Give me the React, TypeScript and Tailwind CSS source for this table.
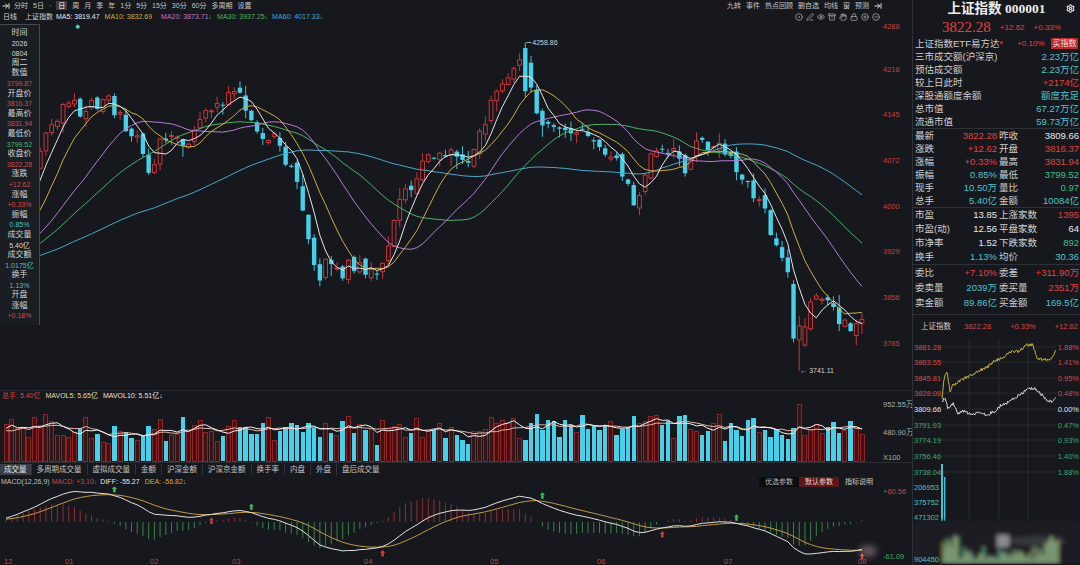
import {
  ArrowRightToLine,
  Settings,
  CircleDot,
  PenLine,
  Eye,
  Archive,
  Hand,
  Lock,
  CirclePlus,
  CircleMinus,
} from "lucide-react";

const BG = "#16181d";
const RED = "#d9393b";
const CYAN = "#46d0ea";
const FONT = "Liberation Sans, Noto Sans CJK SC, sans-serif";

function mulberry32(a: number) {
  return function () {
    a |= 0;
    a = (a + 0x6d2b79f5) | 0;
    let t = Math.imul(a ^ (a >>> 15), 1 | a);
    t = (t + Math.imul(t ^ (t >>> 7), 61 | t)) ^ t;
    return ((t ^ (t >>> 14)) >>> 0) / 4294967296;
  };
}

function interp(pts: [number, number][], x: number) {
  if (x <= pts[0][0]) return pts[0][1];
  for (let k = 1; k < pts.length; k++) {
    if (x <= pts[k][0]) {
      const [x0, y0] = pts[k - 1];
      const [x1, y1] = pts[k];
      return y0 + ((y1 - y0) * (x - x0)) / (x1 - x0);
    }
  }
  return pts[pts.length - 1][1];
}

function sma(arr: number[], n: number) {
  return arr.map((_, i) => {
    if (i < n - 1) return NaN;
    let s = 0;
    for (let k = i - n + 1; k <= i; k++) s += arr[k];
    return s / n;
  });
}

function ema(arr: number[], n: number) {
  const k = 2 / (n + 1);
  const out: number[] = [];
  arr.forEach((v, i) => out.push(i === 0 ? v : v * k + out[i - 1] * (1 - k)));
  return out;
}

// daily candles, x in page pixels
const N = 151;
const W = 70;
const STEP = (862 - 6) / (N - 1);
const cx = (i: number) => 6 + i * STEP;
const py = (p: number) => 24 + (4288 - p) * (319 / 503);

const KEYS: [number, number][] = [
  [-420, 3900], [-300, 3930], [-200, 3890], [-100, 3910], [0, 3930], [20, 4010],
  [40, 4090], [55, 4130], [65, 4165], [80, 4150], [95, 4160], [110, 4165],
  [125, 4130], [140, 4100], [150, 4050], [162, 4110], [175, 4120], [190, 4095],
  [205, 4150], [220, 4170], [236, 4185], [248, 4150], [262, 4120], [278, 4100],
  [292, 4060], [305, 3990], [318, 3870], [328, 3925], [340, 3895], [352, 3910],
  [365, 3905], [378, 3895], [390, 3950], [402, 4010], [418, 4050], [435, 4085],
  [452, 4090], [468, 4080], [482, 4130], [496, 4180], [510, 4215], [522, 4245],
  [532, 4180], [545, 4120], [558, 4125], [572, 4110], [588, 4115], [600, 4085],
  [615, 4075], [626, 4040], [634, 4000], [645, 4050], [658, 4095], [670, 4090],
  [684, 4060], [697, 4105], [712, 4100], [724, 4080], [738, 4065], [752, 4030],
  [765, 3995], [778, 3930], [790, 3880], [800, 3780], [810, 3845], [822, 3855],
  [835, 3830], [848, 3815], [862, 3822],
];

type Candle = { o: number; h: number; l: number; c: number; v: number };
const rand = mulberry32(20260804);
const all: Candle[] = [];
let prev = 3900;
for (let i = -W; i < N; i++) {
  const base = interp(KEYS, cx(i));
  const c = base + (rand() - 0.5) * 26;
  const o = prev + (rand() - 0.5) * 14;
  const h = Math.max(o, c) + rand() * rand() * 22 + 1;
  const l = Math.min(o, c) - rand() * rand() * 22 - 1;
  const v = 0.3 + rand() * 0.5 + rand() * rand() * 0.25 + Math.abs(c - o) / 300;
  all.push({ o, h, l, c, v });
  prev = c;
}
for (let i = W; i < all.length; i++) {
  all[i].h = Math.min(all[i].h, 4244);
  all[i].l = Math.max(all[i].l, 3762);
}
const ip = Math.round((523 - 6) / STEP);
const il = Math.round((800 - 6) / STEP);
Object.assign(all[W + ip], { o: 4250, c: 4182, h: 4258.86, l: 4172 });
Object.assign(all[W + il - 1], { o: 3878, c: 3792, h: 3884, l: 3786 });
Object.assign(all[W + il], { o: 3790, c: 3812, h: 3828, l: 3741.11 });
Object.assign(all[W + N - 1], { o: 3816.37, c: 3822.28, h: 3831.94, l: 3799.52 });

const vis = all.slice(W);
const closes = all.map((c) => c.c);
const MAS = [
  { n: 60, color: "#4aa9cc" },
  { n: 30, color: "#49b36a" },
  { n: 20, color: "#b77bd6" },
  { n: 10, color: "#cfae3e" },
  { n: 5, color: "#e6e6e6" },
].map((m) => ({
  ...m,
  pts: sma(closes, m.n)
    .slice(W)
    .map((v, i) => `${cx(i).toFixed(1)},${py(v).toFixed(1)}`)
    .join(" "),
}));

const vols = all.map((c) => c.v);
const vmax = Math.max(...vis.map((c) => c.v)) * 1.02;
const vy = (v: number) => 461 - (v / vmax) * 58;
const mavol = [
  { n: 10, color: "#e3b6a6" },
  { n: 5, color: "#f2f2f2" },
].map((m) => ({
  ...m,
  pts: sma(vols, m.n)
    .slice(W)
    .map((v, i) => `${cx(i).toFixed(1)},${vy(v).toFixed(1)}`)
    .join(" "),
}));

const e12 = ema(closes, 12);
const e26 = ema(closes, 26);
const diffAll = e12.map((v, i) => v - e26[i]);
const deaAll = ema(diffAll, 9);
const diff = diffAll.slice(W);
const dea = deaAll.slice(W);
const macd = diff.map((v, i) => 2 * (v - dea[i]));
const mMax = Math.max(...diff.map(Math.abs), ...dea.map(Math.abs), ...macd.map(Math.abs));
const my = (v: number) => 522 - (v / mMax) * 32;
const crosses: { x: number; y: number; up: boolean }[] = [];
for (let j = 1; j < N; j++) {
  if (macd[j - 1] < 0 && macd[j] >= 0) crosses.push({ x: cx(j), y: my(dea[j]) + 3, up: true });
  if (macd[j - 1] > 0 && macd[j] <= 0) crosses.push({ x: cx(j), y: my(dea[j]) - 9, up: false });
}

const MONTHS: [string, number][] = [
  ["12", 4], ["01", 65], ["02", 150], ["03", 232], ["04", 364],
  ["05", 490], ["06", 597], ["07", 724], ["08", 858],
];

function TopBar() {
  const periods = ["分时", "5日", "·", "日", "周", "月", "季", "年", "1分", "5分", "15分", "30分", "60分", "多周期", "设置"];
  const tools = ["九转", "事件", "热点回顾", "删自选", "均线", "窗", "预测"];
  return (
    <div className="flex flex-col text-[7px] leading-none">
      <div className="flex h-[11px] items-center">
        <ArrowRightToLine className="ml-[2px] h-[8px] w-[8px] text-[#e0e0e0]" strokeWidth={3} />
        <div className="ml-[4px] flex items-center gap-[5px]">
          {periods.map((p) => (
            <span
              key={p}
              className={p === "日" ? "bg-[#3b3e45] px-[2px] py-[1px] text-white" : "text-[#c4c4c4]"}
            >
              {p}
            </span>
          ))}
        </div>
        <div className="ml-auto mr-[30px] flex items-center gap-[5px] text-[#c4c4c4]">
          {tools.map((t) => (
            <span key={t}>{t}</span>
          ))}
          <ArrowRightToLine className="h-[8px] w-[8px] text-[#e0e0e0]" strokeWidth={3} />
        </div>
      </div>
      <div className="flex h-[11px] items-center">
        <span className="ml-[3px] text-[#d0d0d0]">日线</span>
        <span className="ml-[8px] text-[#d0d0d0]">上证指数</span>
        <span className="ml-[3px] text-[#e8e8e8]">MA5: 3819.47</span>
        <span className="ml-[5px] text-[#cfae3e]">MA10: 3832.69</span>
        <span className="ml-[9px] text-[#b77bd6]">
          MA20: 3873.71<span className="text-[#3fb35f]">↓</span>
        </span>
        <span className="ml-[5px] text-[#49b36a]">
          MA30: 3937.25<span className="text-[#3fb35f]">↓</span>
        </span>
        <span className="ml-[4px] text-[#4aa9cc]">
          MA60: 4017.33<span className="text-[#3fb35f]">↓</span>
        </span>
        <div className="ml-auto mr-[32px] flex items-center gap-[3px] text-[#bdbdbd]">
          <CircleDot className="h-[8px] w-[8px]" />
          <PenLine className="h-[8px] w-[8px]" />
          <Eye className="h-[8px] w-[8px]" />
          <Archive className="h-[8px] w-[8px]" />
          <Hand className="h-[8px] w-[8px]" />
          <Lock className="h-[8px] w-[8px]" />
          <CirclePlus className="h-[8px] w-[8px]" />
          <CircleMinus className="h-[8px] w-[8px]" />
        </div>
      </div>
    </div>
  );
}

const INFO: [string, string][] = [
  ["时间", "l"], ["2026", "w"], ["0804", "w"], ["周二", "l"], ["数值", "l"], ["3799.87", "r"],
  ["开盘价", "l"], ["3816.37", "r"], ["最高价", "l"], ["3831.94", "r"], ["最低价", "l"], ["3799.52", "g"],
  ["收盘价", "l"], ["3822.28", "r"], ["涨跌", "l"], ["+12.62", "r"], ["涨幅", "l"], ["+0.33%", "r"],
  ["振幅", "l"], ["0.85%", "t"], ["成交量", "l"], ["5.40亿", "w"], ["成交额", "l"], ["1.0175亿", "t"],
  ["换手", "l"], ["1.13%", "t"], ["开盘", "l"], ["涨幅", "l"], ["+0.18%", "r"],
];

const INFO_CLS: Record<string, string> = {
  l: "text-[8px] text-[#d2d2d2]",
  w: "text-[7px] text-[#d8d8d8]",
  r: "text-[7px] text-[#d24a4a]",
  g: "text-[7px] text-[#3dbb72]",
  t: "text-[7px] text-[#44c0cc]",
};

function MainChart() {
  return (
    <div className="relative h-[368px]">
      <svg width={912} height={368} viewBox="0 22 912 368" fontFamily={FONT}>
        {vis.map((c, i) => {
          const x = cx(i);
          const up = c.c >= c.o;
          const top = py(Math.max(c.o, c.c));
          const bot = py(Math.min(c.o, c.c));
          const h = Math.max(bot - top, 1);
          return up ? (
            <g key={i}>
              <line x1={x} x2={x} y1={py(c.h)} y2={top} stroke={RED} strokeWidth={0.9} />
              <line x1={x} x2={x} y1={bot} y2={py(c.l)} stroke={RED} strokeWidth={0.9} />
              <rect x={x - 1.9} y={top} width={3.8} height={h} fill={BG} stroke={RED} strokeWidth={0.9} />
            </g>
          ) : (
            <g key={i}>
              <line x1={x} x2={x} y1={py(c.h)} y2={py(c.l)} stroke={CYAN} strokeWidth={0.9} />
              <rect x={x - 2.2} y={top} width={4.4} height={h} fill={CYAN} />
            </g>
          );
        })}
        {MAS.map((m) => (
          <polyline key={m.n} points={m.pts} fill="none" stroke={m.color} strokeWidth={1} />
        ))}
        <line x1={cx(ip) + 1} x2={cx(ip) + 6} y1={py(4258.86)} y2={py(4258.86)} stroke="#cfcfcf" strokeWidth={0.8} />
        <text x={cx(ip) + 7} y={py(4258.86) + 2.5} fontSize={7} fill="#d0d0d0">
          4258.86
        </text>
        <text x={cx(il) + 1} y={py(3741.11) + 2.5} fontSize={7} fill="#d0d0d0">
          ← 3741.11
        </text>
        <rect x={76} y={25} width={3.5} height={3.5} fill="#3fd0c0" transform="rotate(45 77.75 26.75)" />
        {[4288, 4216, 4145, 4072, 4000, 3929, 3856, 3785].map((p) => (
          <text key={p} x={883} y={Math.max(py(p) + 2.5, 29)} fontSize={7.5} fill="#c04446">
            {p}
          </text>
        ))}
      </svg>
      <div className="absolute left-0 top-[2px] flex w-[40px] flex-col items-center border-r border-t border-[#454950] bg-[#1a1d22] pb-[4px] pt-[3px]">
        {INFO.map(([t, k], i) => (
          <div key={i} className={`flex h-[10.1px] items-center leading-none ${INFO_CLS[k]}`}>
            {t}
          </div>
        ))}
      </div>
    </div>
  );
}

function VolumePanel() {
  return (
    <div className="flex flex-col border-t border-[#24272d]">
      <div className="flex h-[8px] items-center gap-[5px] text-[7px] leading-none">
        <span className="ml-[2px] text-[#d04444]">总手: 5.40亿</span>
        <span className="text-[#e8dcb0]">MAVOL5: 5.65亿</span>
        <span className="text-[#e6e6e6]">MAVOL10: 5.51亿↓</span>
      </div>
      <svg width={912} height={63} viewBox="0 399 912 63" fontFamily={FONT} shapeRendering="crispEdges">
        {vis.map((c, i) => {
          const x = cx(i);
          const y = vy(c.v);
          return c.c >= c.o ? (
            <rect key={i} x={x - 2} y={y} width={4} height={461 - y} fill="#3e1113" stroke="#a52b2d" strokeWidth={0.8} />
          ) : (
            <rect key={i} x={x - 2.2} y={y} width={4.4} height={461 - y} fill={CYAN} />
          );
        })}
        <g shapeRendering="auto">
          {mavol.map((m) => (
            <polyline key={m.n} points={m.pts} fill="none" stroke={m.color} strokeWidth={1} />
          ))}
        </g>
        <text x={883} y={407} fontSize={7.5} fill="#a8adb4">952.55万</text>
        <text x={883} y={435} fontSize={7.5} fill="#a8adb4">480.90万</text>
        <text x={883} y={460} fontSize={7.5} fill="#a8adb4">X100</text>
      </svg>
    </div>
  );
}

function Tabs() {
  const tabs = ["成交量", "多周期成交量", "虚拟成交量", "金额", "沪深金额", "沪深京金额", "换手率", "内盘", "外盘", "盘后成交量"];
  return (
    <div className="flex h-[14px] items-center border-t border-[#2a2d33] text-[7.5px] leading-none">
      {tabs.map((t, i) => (
        <span
          key={t}
          className={
            i === 0
              ? "flex h-[11px] items-center bg-[#3a3d44] px-[4px] text-[#e6e6e6]"
              : "flex h-[11px] items-center border-l border-[#30333a] px-[5px] text-[#c2c2c2]"
          }
        >
          {t}
        </span>
      ))}
    </div>
  );
}

function MacdPanel() {
  return (
    <div className="flex flex-col">
      <div className="flex h-[11px] items-center text-[7px] leading-none">
        <span className="ml-[1px] text-[#bdbdbd]">MACD(12,26,9)</span>
        <span className="ml-[2px] text-[#d04444]">MACD: +3.10↓</span>
        <span className="ml-[3px] text-[#e6e6e6]">DIFF: -55.27</span>
        <span className="ml-[5px] text-[#cfae3e]">DEA: -56.82↓</span>
        <div className="ml-auto mr-[35px] flex h-[10px] items-stretch">
          <span className="flex items-center bg-[#0b0c0f] px-[6px] text-[#b8b8b8]">优选参数</span>
          <span className="flex items-center bg-[#5a1618] px-[6px] text-[#f3d6d6]">默认参数</span>
          <span className="ml-[2px] flex items-center px-[4px] text-[#c8c8c8]">指标说明</span>
        </div>
      </div>
      <svg width={912} height={78} viewBox="0 487 912 78" fontFamily={FONT}>
        {macd.map((v, i) => (
          <line
            key={i}
            x1={cx(i)}
            x2={cx(i)}
            y1={522}
            y2={my(v)}
            stroke={v >= 0 ? "#9c3236" : "#3f8c52"}
            strokeWidth={0.9}
          />
        ))}
        <polyline
          points={dea.map((v, i) => `${cx(i).toFixed(1)},${my(v).toFixed(1)}`).join(" ")}
          fill="none"
          stroke="#c39a3c"
          strokeWidth={1}
        />
        <polyline
          points={diff.map((v, i) => `${cx(i).toFixed(1)},${my(v).toFixed(1)}`).join(" ")}
          fill="none"
          stroke="#e2e2e2"
          strokeWidth={1}
        />
        {crosses.map((c, i) => (
          <g key={i} fill={c.up ? "#e0393b" : "#3fc060"}>
            <polygon points={`${c.x - 2.5},${c.y + 3} ${c.x},${c.y} ${c.x + 2.5},${c.y + 3}`} />
            <rect x={c.x - 1.2} y={c.y + 3} width={2.4} height={3.5} />
          </g>
        ))}
        <text x={883} y={494} fontSize={7.5} fill="#c04446">+60.56</text>
        <text x={883} y={559} fontSize={7.5} fill="#3fa860">-61.09</text>
        {MONTHS.map(([m, x]) => (
          <text key={m} x={x} y={564} fontSize={7.5} fill="#c04446">
            {m}
          </text>
        ))}
        <ellipse cx={868} cy={551} rx={9} ry={6} fill="#f0c8c8" opacity={0.35} filter="url(#soft)" />
        <defs>
          <filter id="soft" x="-1" y="-1" width="3" height="3">
            <feGaussianBlur stdDeviation={3} />
          </filter>
        </defs>
      </svg>
    </div>
  );
}

const TC: Record<string, string> = {
  r: "text-[#e2433f]",
  t: "text-[#4cc3cc]",
  w: "text-[#e8e8e8]",
  g: "text-[#3fbf80]",
};

function Single({ label, value, c }: { label: string; value: string; c: string }) {
  return (
    <div className="flex h-[13px] items-center justify-between pl-[2px] pr-[1px]">
      <span>{label}</span>
      <span className={TC[c]}>{value}</span>
    </div>
  );
}

type PairRow = [string, string, string, string, string, string];

function Pair({ r, h }: { r: PairRow; h: string }) {
  return (
    <div className={`flex items-center ${h}`}>
      <div className="flex w-[86px] items-center justify-between pl-[2px] pr-[2px]">
        <span>{r[0]}</span>
        <span className={TC[r[2]]}>{r[1]}</span>
      </div>
      <div className="flex flex-1 items-center justify-between pr-[1px]">
        <span>{r[3]}</span>
        <span className={TC[r[5]]}>{r[4]}</span>
      </div>
    </div>
  );
}

const BLOCK2: PairRow[] = [
  ["最新", "3822.28", "r", "昨收", "3809.66", "w"],
  ["涨跌", "+12.62", "r", "开盘", "3816.37", "r"],
  ["涨幅", "+0.33%", "r", "最高", "3831.94", "r"],
  ["振幅", "0.85%", "t", "最低", "3799.52", "g"],
  ["现手", "10.50万", "t", "量比", "0.97", "g"],
  ["总手", "5.40亿", "t", "金额", "10084亿", "t"],
];
const BLOCK3: PairRow[] = [
  ["市盈", "13.85", "w", "上涨家数", "1395", "r"],
  ["市盈(动)", "12.56", "w", "平盘家数", "64", "w"],
  ["市净率", "1.52", "w", "下跌家数", "892", "g"],
  ["换手", "1.13%", "t", "均价", "30.36", "t"],
];
const BLOCK4: PairRow[] = [
  ["委比", "+7.10%", "r", "委差", "+311.90万", "r"],
  ["委卖量", "2039万", "t", "委买量", "2351万", "r"],
  ["卖金额", "89.86亿", "t", "买金额", "169.5亿", "t"],
];

const MINI_W: [number, number][] = [
  [941, 403], [944, 398], [947, 410], [952, 404], [957, 414], [963, 412], [970, 416],
  [978, 413], [986, 416], [994, 412], [1000, 406], [1006, 404], [1012, 400], [1020, 395],
  [1028, 390], [1034, 389], [1040, 395], [1046, 401], [1050, 403], [1055, 397],
];
const MINI_Y: [number, number][] = [
  [941, 399], [943, 380], [946, 372], [949, 392], [952, 386], [956, 384], [962, 380],
  [970, 376], [978, 372], [986, 368], [994, 362], [1002, 358], [1010, 353], [1018, 352],
  [1026, 346], [1032, 346], [1036, 360], [1042, 360], [1048, 362], [1055, 352],
];

function wiggle(pts: [number, number][], seed: number) {
  const r = mulberry32(seed);
  const out: string[] = [];
  for (let x = 941; x <= 1055; x += 0.8) {
    out.push(`${x.toFixed(1)},${(interp(pts, x) + (r() - 0.5) * 3.2).toFixed(1)}`);
  }
  return out.join(" ");
}

const MINI_GRID: [number, string, string, string][] = [
  [348, "3881.28", "1.88%", "#d24a4a"],
  [363, "3863.55", "1.41%", "#d24a4a"],
  [379, "3845.81", "0.95%", "#d24a4a"],
  [394, "3828.08", "0.48%", "#d24a4a"],
  [410, "3809.66", "0.00%", "#e0e0e0"],
  [426, "3791.93", "0.47%", "#3aa866"],
  [441, "3774.19", "0.93%", "#3aa866"],
  [457, "3756.46", "1.40%", "#3aa866"],
  [473, "3738.04", "1.88%", "#3aa866"],
];

const miniRand = mulberry32(77);
const MINI_BARS = Array.from({ length: 58 }, (_, i) => ({
  x: 942 + i * 2,
  h: 4 + miniRand() * 14 + (i < 8 || i > 50 ? 12 : 0),
  c: i % 3 === 0 ? "#d8e07a" : "#8fd8b0",
}));

function MiniChart() {
  return (
    <svg width={168} height={231} viewBox="912 334 168 231" fontFamily={FONT}>
      <defs>
        <filter id="blur2" x="-0.2" y="-0.5" width="1.4" height="2">
          <feGaussianBlur stdDeviation={2.2} />
        </filter>
      </defs>
      {MINI_GRID.map(([y]) => (
        <line key={y} x1={913} x2={1055} y1={y} y2={y} stroke="#2a2d33" strokeWidth={0.8} />
      ))}
      {[968, 998, 1027].map((x) => (
        <line key={x} x1={x} x2={x} y1={340} y2={522} stroke="#2a2d33" strokeWidth={0.8} />
      ))}
      {MINI_GRID.map(([y, p, pct, col]) => (
        <g key={p} fontSize={7.5} fill={col}>
          <text x={913} y={y + 2.5}>{p}</text>
          <text x={1078} y={y + 2.5} textAnchor="end">{pct}</text>
        </g>
      ))}
      <polyline points={wiggle(MINI_Y, 5)} fill="none" stroke="#d8c23a" strokeWidth={0.9} />
      <polyline points={wiggle(MINI_W, 9)} fill="none" stroke="#eeeeee" strokeWidth={0.9} />
      <rect x={940} y={465} width={2} height={57} fill="#46c2d8" />
      <rect x={943} y={478} width={1.4} height={44} fill="#46c2d8" />
      <text x={913} y={491} fontSize={7.5} fill="#4cc3cc">206953</text>
      <text x={913} y={506} fontSize={7.5} fill="#4cc3cc">375752</text>
      <text x={913} y={521} fontSize={7.5} fill="#4cc3cc">471302</text>
      <g filter="url(#blur2)">
        <rect x={912} y={522} width={168} height={43} fill="#1b1e22" />
        {MINI_BARS.map((b) => (
          <rect key={b.x} x={b.x} y={565 - b.h} width={1.5} height={b.h} fill={b.c} opacity={0.8} />
        ))}
        <rect x={996} y={536} width={12} height={12} fill="#8a8c90" />
        <ellipse cx={1035} cy={542} rx={30} ry={5} fill="#ffffff" opacity={0.12} />
      </g>
      <text x={913} y={563} fontSize={7.5} fill="#4cc3cc">904450</text>
    </svg>
  );
}

function SidePanel() {
  return (
    <div className="flex w-[168px] flex-col border-l border-[#2e3238] text-[9.5px] leading-none text-[#cfcfcf]">
      <div className="relative flex h-[18px] items-center justify-center">
        <span className="font-['Liberation_Serif','Noto_Sans_CJK_SC',serif] text-[13.5px] font-bold text-[#eeeeee]">
          上证指数 000001
        </span>
        <Settings className="absolute right-[5px] top-[4px] h-[9px] w-[9px] text-[#dddddd]" strokeWidth={3} />
      </div>
      <div className="flex h-[19px] items-center justify-center gap-[9px] pl-[10px] text-[#e2433f]">
        <span className="font-['Liberation_Serif',serif] text-[15px]">3822.28</span>
        <span className="text-[8px]">+12.62</span>
        <span className="text-[8px]">+0.33%</span>
      </div>
      <div className="flex h-[13px] items-center pl-[2px] pr-[2px]">
        <span>
          上证指数ETF易方达<span className="text-[#e2433f]">*</span>
        </span>
        <span className="ml-[14px] text-[8px] text-[#e2433f]">+0.10%</span>
        <span className="ml-auto flex h-[11px] w-[27px] items-center justify-center bg-[#b8282b] text-[8px] text-[#f6dede]">
          买指数
        </span>
      </div>
      <Single label="三市成交额(沪深京)" value="2.23万亿" c="t" />
      <Single label="预估成交额" value="2.23万亿" c="t" />
      <Single label="较上日此时" value="+2174亿" c="r" />
      <Single label="深股通额度余额" value="额度充足" c="t" />
      <Single label="总市值" value="67.27万亿" c="t" />
      <Single label="流通市值" value="59.73万亿" c="t" />
      <div className="border-t border-[#2e3238]">
        {BLOCK2.map((r) => (
          <Pair key={r[0]} r={r} h="h-[13px]" />
        ))}
      </div>
      <div className="border-t border-[#2e3238]">
        {BLOCK3.map((r) => (
          <Pair key={r[0]} r={r} h="h-[14px]" />
        ))}
      </div>
      <div className="border-t border-[#2e3238] pb-[4px]">
        {BLOCK4.map((r) => (
          <Pair key={r[0]} r={r} h="h-[15px]" />
        ))}
      </div>
      <div className="flex h-[19px] items-center whitespace-nowrap border-t border-[#2e3238] pt-[6px] text-[7.5px]">
        <span className="ml-[8px] shrink-0 text-[#cfcfcf]">上证指数</span>
        <span className="ml-[13px] shrink-0 text-[#d24a4a]">3822.28</span>
        <span className="ml-[19px] shrink-0 text-[#d24a4a]">+0.33%</span>
        <span className="ml-[19px] shrink-0 text-[#d24a4a]">+12.62</span>
      </div>
      <MiniChart />
    </div>
  );
}

export default function App() {
  return (
    <div className="flex h-[565px] w-[1080px] overflow-hidden bg-[#16181d] font-['Liberation_Sans','Noto_Sans_CJK_SC',sans-serif] text-[#c8c8c8]">
      <div className="flex w-[912px] flex-col">
        <TopBar />
        <MainChart />
        <VolumePanel />
        <Tabs />
        <MacdPanel />
      </div>
      <SidePanel />
    </div>
  );
}
